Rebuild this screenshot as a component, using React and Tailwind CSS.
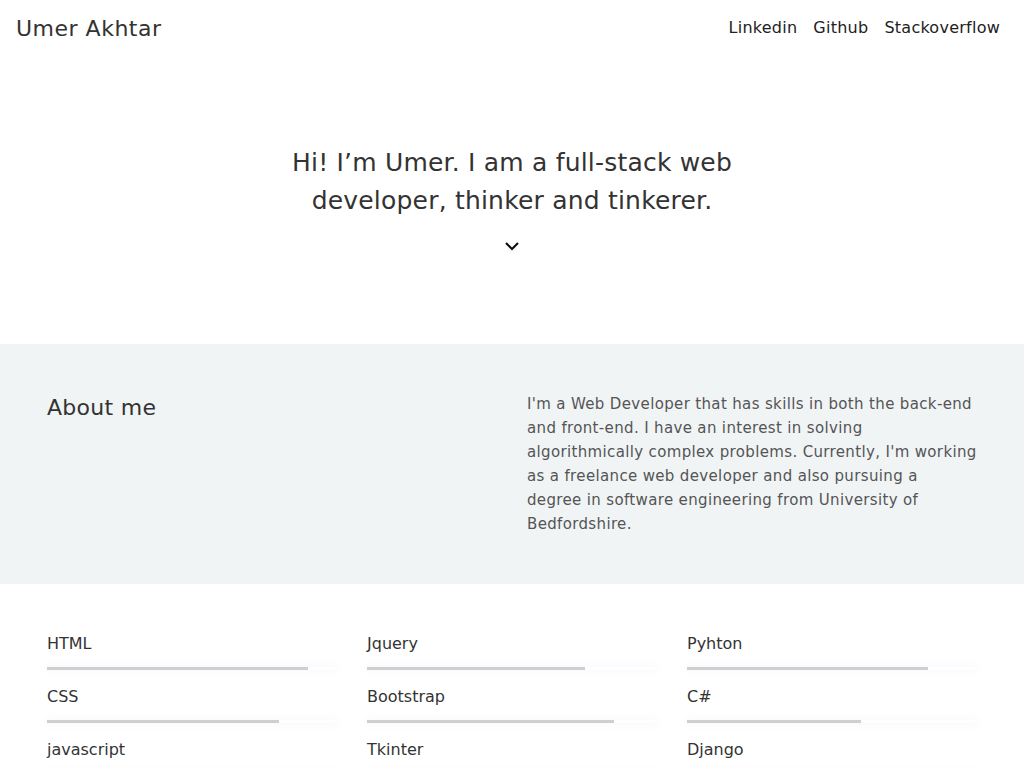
import React from 'react';

const skills = [
  [
    { name: 'HTML', pct: 90 },
    { name: 'CSS', pct: 80 },
    { name: 'javascript', pct: 80 },
  ],
  [
    { name: 'Jquery', pct: 75 },
    { name: 'Bootstrap', pct: 85 },
    { name: 'Tkinter', pct: 70 },
  ],
  [
    { name: 'Pyhton', pct: 83 },
    { name: 'C#', pct: 60 },
    { name: 'Django', pct: 75 },
  ],
];

const SkillBar = ({ name, pct }) => (
  <div className="mb-[15px]">
    <div className="text-[16px] leading-[24px] text-[#333]">{name}</div>
    <div className="mt-[11px] h-[3px] bg-white shadow-[0_0_8px_rgba(120,120,220,0.12)]">
      <div className="h-full bg-[#cfcfcf]" style={{ width: `${pct}%` }} />
    </div>
  </div>
);

export default function App() {
  return (
    <div className="min-h-screen bg-white font-['DejaVu_Sans',sans-serif] text-[#333]">
      {/* Header */}
      <header className="flex items-center justify-between pl-4 pr-6 h-[56px]">
        <a className="text-[22px] text-[#333] tracking-[0.5px]">Umer Akhtar</a>
        <nav className="flex gap-4 text-[16px] tracking-[0.25px] text-[#222]">
          <a>Linkedin</a>
          <a>Github</a>
          <a>Stackoverflow</a>
        </nav>
      </header>

      {/* Hero */}
      <section className="h-[288px] flex flex-col items-center pt-[88px]">
        <h1 className="text-[25px] leading-[38px] tracking-[0.2px] text-center text-[#333] max-w-[470px]">
          Hi! I’m Umer. I am a full-stack web developer, thinker and tinkerer.
        </h1>
        <svg className="mt-[21px]" width="16" height="10" viewBox="0 0 16 10" fill="none">
          <path d="M2 2l6 6 6-6" stroke="#111" strokeWidth="2.2" />
        </svg>
      </section>

      {/* About */}
      <section className="bg-[#f0f4f5] h-[240px]">
        <div className="w-[960px] mx-auto px-[15px] pt-[48px] grid grid-cols-2 gap-[30px]">
          <h2 className="text-[22px] leading-[32px] tracking-[0.3px] text-[#333]">About me</h2>
          <p className="text-[15px] leading-[24px] tracking-[0.35px] text-[#555]">
            I'm a Web Developer that has skills in both the back-end and front-end. I have an interest in solving algorithmically complex problems. Currently, I'm working as a freelance web developer and also pursuing a degree in software engineering from University of Bedfordshire.
          </p>
        </div>
      </section>

      {/* Skills */}
      <section className="pt-[48px]">
        <div className="w-[960px] mx-auto px-[15px] grid grid-cols-3 gap-[30px]">
          {skills.map((col, i) => (
            <div key={i}>
              {col.map((s) => (
                <SkillBar key={s.name} {...s} />
              ))}
            </div>
          ))}
        </div>
      </section>
    </div>
  );
}
